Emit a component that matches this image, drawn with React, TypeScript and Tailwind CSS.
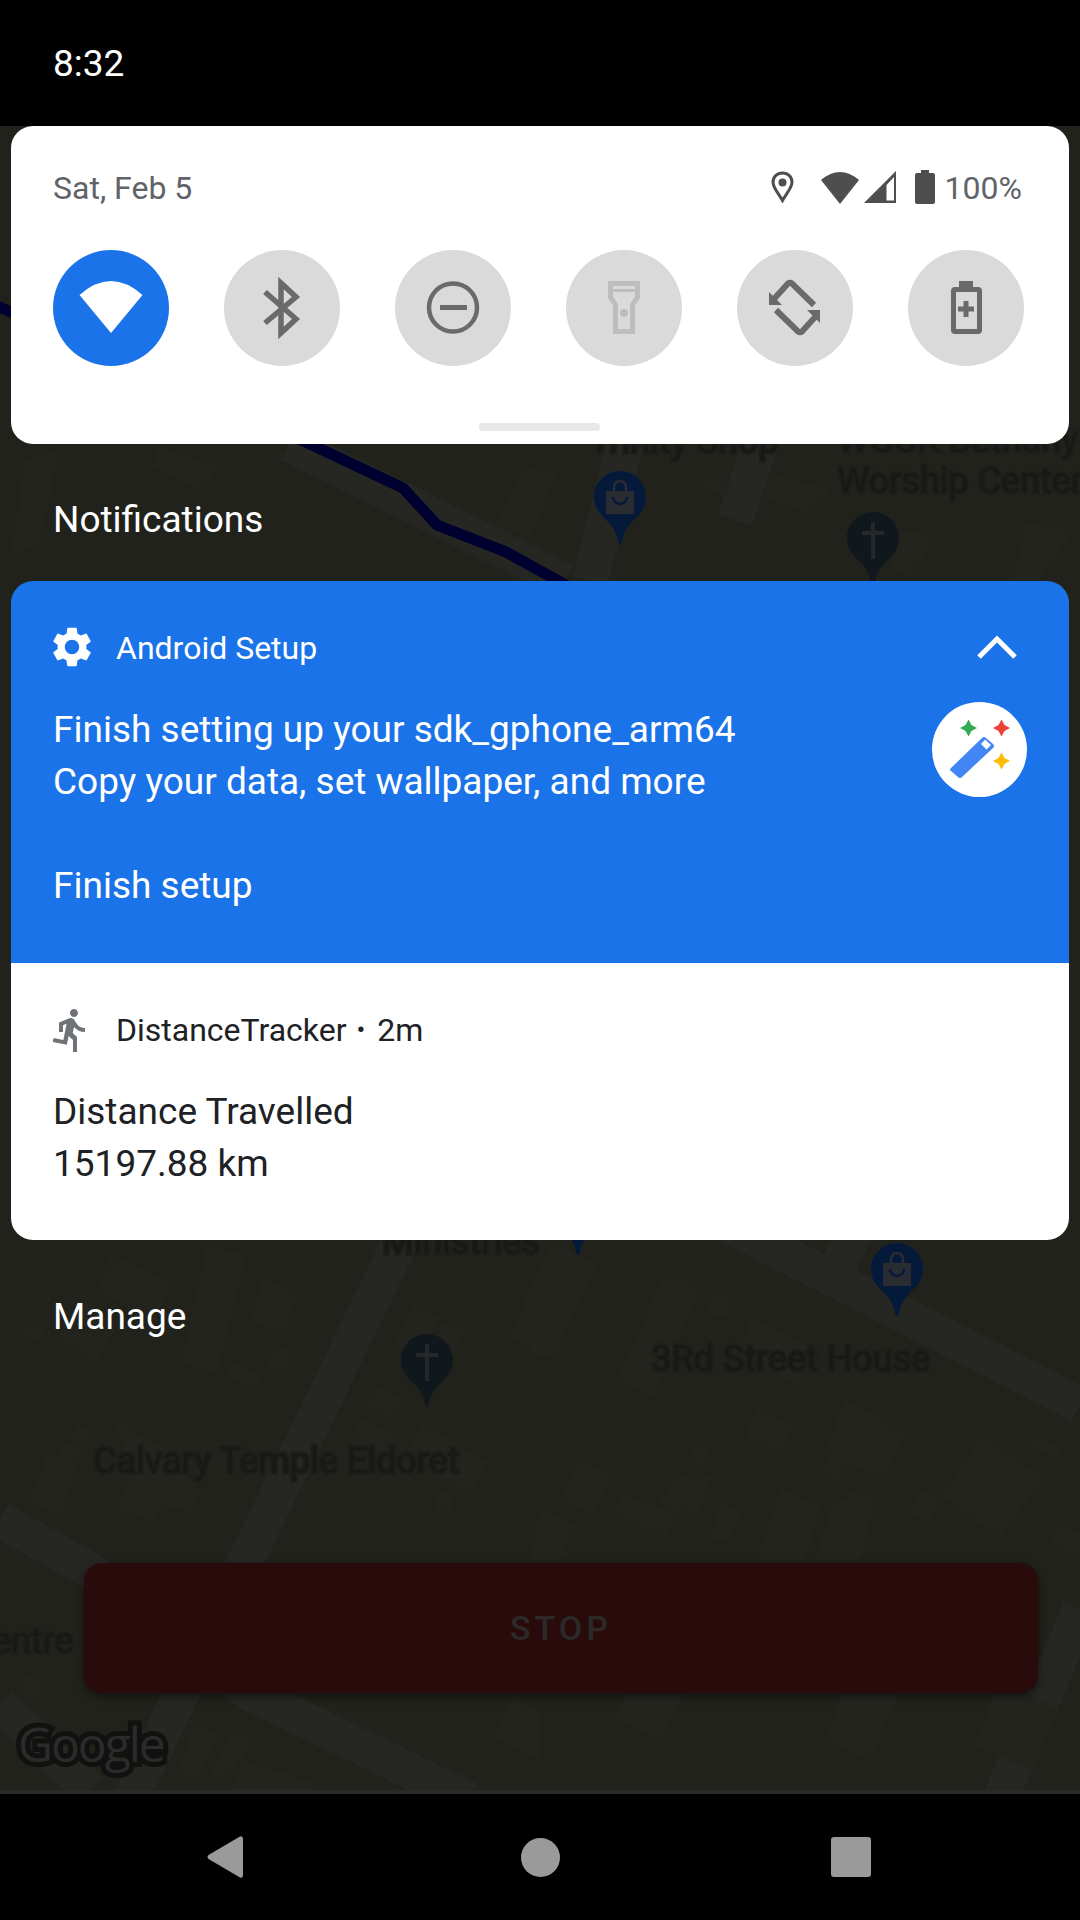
const buildings = [
  '158,447 220,467 200,490 152,467',
  '523,467 558,473 530,537 496,527',
  '771,473 833,490 806,513 764,497',
  '709,473 733,487 723,497 702,485',
  '1026,523 1074,530 1040,580 1012,580',
  '902,530 937,537 909,577 890,570',
  '25,460 60,450 40,540 10,560',
  '110,1255 172,1282 155,1323 98,1290',
  '83,1293 117,1327 96,1363 57,1337',
  '21,1330 45,1327 41,1340 21,1337',
  '207,1245 246,1255 217,1373 181,1363',
  '263,1278 298,1292 284,1333 250,1320',
  '275,1345 291,1350 284,1373 267,1368',
  '231,1363 260,1375 257,1387 227,1377',
  '415,1303 441,1317 420,1353 394,1343',
  '442,1322 465,1330 451,1363 434,1353',
  '377,1385 403,1400 389,1420 365,1403',
  '360,1417 394,1433 379,1450 355,1433',
  '424,1423 489,1463 467,1497 410,1447',
  '437,1492 451,1492 453,1510 437,1510',
  '76,1423 93,1430 86,1443 71,1438',
  '59,1443 84,1448 79,1460 57,1457',
  '48,1453 79,1463 60,1517 29,1503',
  '112,1418 162,1447 200,1490 188,1513 162,1503 152,1523 115,1507 133,1473',
  '537,1280 540,1350 510,1337',
  '550,1243 597,1263 554,1358 530,1353 525,1300',
  '666,1272 700,1290 654,1397 616,1380',
  '712,1295 726,1293 729,1315 707,1317',
  '752,1317 812,1347 798,1387 741,1347',
  '760,1407 793,1427 778,1453 745,1437',
  '846,1400 905,1433 883,1478 850,1463 836,1483 821,1473 833,1450 824,1450',
  '982,1435 1044,1477 1001,1538 941,1497',
  '1036,1437 1062,1448 1057,1458 1032,1448',
  '922,1490 941,1500 929,1523 910,1513',
  '700,1440 712,1448 702,1468 688,1460',
  '681,1473 695,1483 678,1513 659,1502',
  '698,1472 712,1478 695,1520 681,1513',
  '578,1462 611,1473 595,1515 562,1500',
  '624,1493 674,1515 666,1537 614,1512',
  '721,1503 741,1510 729,1540 709,1540',
  '781,1487 821,1507 805,1560 757,1560',
  '836,1497 852,1500 843,1488 876,1500 860,1560 815,1560',
  '1050,1540 1062,1525 1080,1533 1080,1560',
  '540,1507 578,1525 560,1560 530,1560',
  '22,1675 38,1675 40,1702 26,1702',
  '196,1722 220,1735 198,1780 177,1770',
  '234,1728 255,1742 224,1780 210,1772',
  '241,1760 317,1783 310,1794 231,1794',
  '513,1698 540,1713 540,1760 492,1738',
  '640,1660 690,1680 660,1740 615,1720',
  '850,1670 900,1690 870,1760 825,1740',
  '1000,1680 1060,1710 1030,1770 975,1745',
]

const roads = [
  'M430 1180 L130 1800',
  'M620 1170 L1080 1405',
  'M855 1232 L832 1278',
  'M0 1520 L90 1570 L250 1693 L470 1800',
  'M0 1705 L90 1790',
  'M289 444 L565 581',
  'M625 444 L590 581',
  'M760 444 L735 520',
  'M1080 1610 L1000 1800',
]

const labels = [
  { text: 'Trinity Shop', x: 589, y: 453 },
  { text: 'WGCK Bethany', x: 837, y: 452 },
  { text: 'Worship Center', x: 837, y: 493 },
  { text: 'Ministries', x: 382, y: 1254 },
  { text: '3Rd Street House', x: 651, y: 1371 },
  { text: 'Calvary Temple Eldoret', x: 93, y: 1473 },
  { text: 'entre', x: -8, y: 1653 },
]

function Pin({ x, y, kind }: { x: number; y: number; kind: 'shop' | 'cross' }) {
  const shop = kind === 'shop'
  return (
    <g transform={`translate(${x} ${y})`}>
      <path
        d="M26 0C11.6 0 0 11.6 0 26c0 14 10 20 17 28 4 5 6 11 7 16 .5 3.5 3.5 3.5 4 0 1-5 3-11 7-16 7-8 17-14 17-28C52 11.6 40.4 0 26 0Z"
        fill={shop ? '#051a3b' : '#10171d'}
      />
      {shop ? (
        <g>
          <path d="M12 20h28v23H12Z" fill="#292c30" />
          <path d="M20 20v-4a6 6 0 0 1 12 0v4" fill="none" stroke="#292c30" strokeWidth="2.5" />
          <path d="M19 26a7 7 0 0 0 14 0" fill="none" stroke="#051a3b" strokeWidth="2.5" />
        </g>
      ) : (
        <path d="M24 10h4v9h9v4h-9v24h-4V23h-9v-4h9Z" fill="#25282b" />
      )}
    </g>
  )
}

function MapBackground() {
  return (
    <svg className="absolute inset-0 h-[1920px] w-[1080px]" viewBox="0 0 1080 1920">
      <rect width="1080" height="1920" fill="#22221c" />
      {roads.map((d) => (
        <path key={d} d={d} fill="none" stroke="#262623" strokeWidth="36" />
      ))}
      {buildings.map((p) => (
        <polygon key={p} points={p} fill="#24241f" />
      ))}
      <path
        d="M-5 305 L310 444 L403 488 L437 525 L506 552 L575 590"
        fill="none"
        stroke="#000030"
        strokeWidth="11"
      />
      <Pin x={594} y={471} kind="shop" />
      <Pin x={847} y={512} kind="cross" />
      <Pin x={552} y={1182} kind="shop" />
      <Pin x={871} y={1243} kind="shop" />
      <Pin x={401} y={1334} kind="cross" />
      {labels.map((l) => (
        <text
          key={l.text}
          x={l.x}
          y={l.y}
          fill="#181816"
          stroke="#1e1e1a"
          strokeWidth="4"
          paintOrder="stroke"
          fontSize="36"
          className="font-['Roboto']"
        >
          {l.text}
        </text>
      ))}
      <text
        x="18"
        y="1762"
        fill="#2b2b2b"
        stroke="#111110"
        strokeWidth="10"
        paintOrder="stroke"
        fontSize="48"
        fontWeight="500"
        letterSpacing="-2"
        className="font-['Open_Sans']"
      >
        Google
      </text>
    </svg>
  )
}

function QsTile({ active, children }: { active?: boolean; children: React.ReactNode }) {
  return (
    <div className={active ? 'h-[116px] w-[116px] rounded-full bg-[#1a73e8]' : 'h-[116px] w-[116px] rounded-full bg-[#dadada]'}>
      <svg className="h-[116px] w-[116px]" viewBox="0 0 116 116">
        {children}
      </svg>
    </div>
  )
}

function QuickSettings() {
  return (
    <div className="relative mx-[11px] flex h-[318px] flex-col rounded-[22px] bg-white">
      <div className="mt-[44px] flex h-[34px] items-center justify-between pl-[42px] pr-[47px] text-[#5f6368]">
        <span className="pt-[2px] text-[32px] leading-none">Sat, Feb 5</span>
        <div className="flex items-center">
          <svg className="h-[32px] w-[23px]" viewBox="0 0 23 32">
            <path d="M11.5 2C6 2 2 6 2 11c0 6 6 12 9.5 18.5C15 23 21 17 21 11c0-5-4-9-9.5-9Z" fill="none" stroke="#4e4e4e" strokeWidth="3" />
            <circle cx="11.5" cy="11.5" r="4" fill="#4e4e4e" />
          </svg>
          <svg className="ml-[27px] h-[33px] w-[38px]" viewBox="0 0 38 33">
            <path d="M0 9Q19 -7 38 9L19 33Z" fill="#4e4e4e" />
          </svg>
          <svg className="ml-[5px] h-[32px] w-[32px]" viewBox="0 0 32 32">
            <path d="M0 32L32 0V32Z" fill="#4e4e4e" />
            <path d="M22.5 14V29.5H30V6Z" fill="#fff" />
          </svg>
          <svg className="ml-[19px] h-[34px] w-[20px]" viewBox="0 0 20 34">
            <path d="M6 0h8v3h4a2 2 0 0 1 2 2v27a2 2 0 0 1-2 2H2a2 2 0 0 1-2-2V5a2 2 0 0 1 2-2h4Z" fill="#4e4e4e" />
          </svg>
          <span className="ml-[10px] pt-[2px] text-[32px] leading-none">100%</span>
        </div>
      </div>
      <div className="mt-[46px] flex gap-[55px] pl-[42px]">
        <QsTile active>
          <path d="M26.5 45Q58 17 89.5 45L58 83Z" fill="#fff" />
        </QsTile>
        <QsTile>
          <path d="M41 42L72 69L57 83V33L72 47L41 73" fill="none" stroke="#6a6a6a" strokeWidth="5.5" />
        </QsTile>
        <QsTile>
          <circle cx="58" cy="57.5" r="24" fill="none" stroke="#6a6a6a" strokeWidth="4.5" />
          <rect x="45" y="55" width="27" height="5" fill="#6a6a6a" />
        </QsTile>
        <QsTile>
          <path d="M44.5 33.5H71.5V47L66.5 55V81.5H49.5V55L44.5 47Z" fill="none" stroke="#bdbdbd" strokeWidth="5" />
          <rect x="44" y="39" width="28" height="3" fill="#bdbdbd" />
          <circle cx="58" cy="63" r="4" fill="#bdbdbd" />
        </QsTile>
        <QsTile>
          <path d="M77 55L55 33.5Q53 32 51 33.5L37 49" fill="none" stroke="#6a6a6a" strokeWidth="6" />
          <path d="M32 42V55H45Z" fill="#6a6a6a" />
          <path d="M39 60L61 81.5Q63 83 65 81.5L79 66" fill="none" stroke="#6a6a6a" strokeWidth="6" />
          <path d="M83 73V60H70Z" fill="#6a6a6a" />
        </QsTile>
        <QsTile>
          <path d="M51 31h14v6H51Z" fill="#6a6a6a" />
          <rect x="45.5" y="39.5" width="26" height="42" rx="1.5" fill="none" stroke="#6a6a6a" strokeWidth="5" />
          <path d="M55.5 51h5v5.5H66v5h-5.5V67h-5v-5.5H50v-5h5.5Z" fill="#6a6a6a" />
        </QsTile>
      </div>
      <div className="ml-[468px] mt-[57px] h-[8px] w-[121px] rounded-[4px] bg-[#e8e8e8]" />
    </div>
  )
}

function WandIcon() {
  return (
    <svg className="h-[95px] w-[95px]" viewBox="0 0 95 95">
      <circle cx="47.5" cy="47.5" r="47.5" fill="#fff" />
      <path d="M36.5 17.5L39.5 23L45 26L39.5 29L36.5 34.5L33.5 29L28 26L33.5 23Z" fill="#34a853" />
      <path d="M69.5 17.5L72.5 23L78 26L72.5 29L69.5 34.5L66.500 29L61 26L66.500 23Z" fill="#ea4335" />
      <path d="M69.5 50.5L72.5 56L78 59L72.5 62L69.5 67.5L66.500 62L61 59L66.500 56Z" fill="#fbbc04" />
      <path d="M19 66L50 36Q52 34 54 36L61 42Q63 44 61 46L30 75Q28 77 26 75L19 69Q17 68 19 66Z" fill="#4285f4" />
      <path d="M53 37.5L59 43L54.5 47.5L49 42Z" fill="#fff" />
    </svg>
  )
}

function SetupNotification() {
  return (
    <div className="h-[382px] bg-[#1a73e8] pt-[42px] text-white">
      <div className="flex h-[48px] items-center pl-[37px] pr-[52px]">
        <svg className="h-[48px] w-[48px]" viewBox="0 0 24 24" fill="#fff" fillRule="evenodd">
          <path d="M19.14 12.94c.04-.3.06-.61.06-.94 0-.32-.02-.64-.07-.94l2.03-1.58c.18-.14.23-.41.12-.61l-1.92-3.32c-.12-.22-.37-.29-.59-.22l-2.39.96c-.5-.38-1.03-.7-1.62-.94l-.36-2.54c-.04-.24-.24-.41-.48-.41h-3.84c-.24 0-.43.17-.47.41l-.36 2.54c-.59.24-1.13.57-1.62.94l-2.39-.96c-.22-.08-.47 0-.59.22L2.74 8.87c-.12.21-.08.47.12.61l2.03 1.58c-.05.3-.09.63-.09.94s.02.64.07.94l-2.03 1.58c-.18.14-.23.41-.12.61l1.92 3.32c.12.22.37.29.59.22l2.39-.96c.5.38 1.03.7 1.62.94l.36 2.54c.05.24.24.41.48.41h3.84c.24 0 .44-.17.47-.41l.36-2.54c.59-.24 1.13-.56 1.62-.94l2.39.96c.22.08.47 0 .59-.22l1.92-3.32c.12-.22.07-.47-.12-.61l-2.01-1.58zM12 15.6c-1.98 0-3.6-1.62-3.6-3.6s1.62-3.6 3.6-3.6 3.6 1.62 3.6 3.6-1.62 3.6-3.6 3.6z" />
        </svg>
        <span className="ml-[20px] pt-[2px] text-[32px]">Android Setup</span>
        <svg className="ml-auto h-[24px] w-[40px]" viewBox="0 0 40 24">
          <path d="M2 22L20 4L38 22" fill="none" stroke="#fff" strokeWidth="5" />
        </svg>
      </div>
      <div className="flex items-start justify-between pl-[42px] pr-[42px]">
        <div className="mt-[33px] text-[37px] leading-[52px]">
          <p>Finish setting up your sdk_gphone_arm64</p>
          <p>Copy your data, set wallpaper, and more</p>
          <p className="mt-[52px]">Finish setup</p>
        </div>
        <div className="mt-[31px]">
          <WandIcon />
        </div>
      </div>
    </div>
  )
}

function TrackerNotification() {
  return (
    <div className="h-[277px] bg-white pt-[43px] text-[#202124]">
      <div className="flex h-[48px] items-center pl-[36px]">
        <svg className="h-[48px] w-[48px]" viewBox="0 0 24 24" fill="#6f7276">
          <path d="M13.49 5.48c1.1 0 2-.9 2-2s-.9-2-2-2-2 .9-2 2 .9 2 2 2zm-3.6 13.9l1-4.4 2.1 2v6h2v-7.5l-2.1-2 .6-3c1.3 1.5 3.3 2.5 5.5 2.5v-2c-1.9 0-3.5-1-4.3-2.4l-1-1.6c-.4-.6-1-1-1.7-1-.3 0-.5.1-.8.1l-5.2 2.2v4.7h2v-3.4l1.8-.7-1.6 8.1-4.9-1-.4 2 7 1.4z" />
        </svg>
        <span className="ml-[21px] text-[32px]">DistanceTracker</span>
        <span className="ml-[10px] mr-[12px] text-[26px]">•</span>
        <span className="text-[32px]">2m</span>
      </div>
      <div className="mt-[32px] pl-[42px] text-[37px] leading-[52px]">
        <p>Distance Travelled</p>
        <p>15197.88 km</p>
      </div>
    </div>
  )
}

export default function App() {
  return (
    <div className="relative flex h-[1920px] w-[1080px] flex-col overflow-hidden bg-black font-['Roboto',sans-serif]">
      <MapBackground />
      {/* STOP button sits on top of the map */}
      <div className="absolute left-[84px] top-[1563px] flex h-[130px] w-[954px] items-center justify-center rounded-[18px] bg-[#2a0b0c] shadow-[0_3px_8px_rgba(0,0,0,0.5)]">
        <span className="text-[34px] font-medium tracking-[4px] text-[#2b2a29]">STOP</span>
      </div>

      <div className="relative flex h-[126px] items-center bg-black pl-[53px] pt-[2px] text-[37px] text-white">8:32</div>
      <QuickSettings />
      <div className="relative flex h-[137px] items-center pl-[53px] pt-[15px] text-[37px] text-white">Notifications</div>
      <div className="relative mx-[11px] overflow-hidden rounded-[22px]">
        <SetupNotification />
        <TrackerNotification />
      </div>
      <div className="relative mt-[52px] pl-[53px] text-[37px] leading-[50px] text-white">Manage</div>

      <div className="relative mt-auto flex h-[130px] items-center border-t-[4px] border-[#2a2a27] bg-black pl-[207px]">
        <svg className="h-[42px] w-[36px]" viewBox="0 0 36 42">
          <path d="M33 .5Q36 -.5 36 3V39Q36 42.5 33 41.5L1.5 23Q-.5 21 1.5 19Z" fill="#9a9a9a" />
        </svg>
        <div className="ml-[278px] h-[39px] w-[39px] rounded-full bg-[#9a9a9a]" />
        <div className="ml-[271px] h-[40px] w-[40px] rounded-[3px] bg-[#9a9a9a]" />
      </div>
    </div>
  )
}
